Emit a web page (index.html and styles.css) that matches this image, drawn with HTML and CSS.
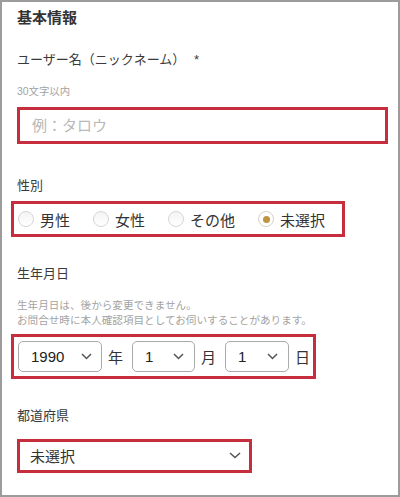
FILE: index.html
```html
<!DOCTYPE html>
<html lang="ja">
<head>
<meta charset="utf-8">
<title>基本情報</title>
<link rel="stylesheet" href="styles.css">
</head>
<body>
<div class="frame">
  <h2 class="heading">基本情報</h2>

  <div class="label label-name">ユーザー名（ニックネーム） <span class="req">*</span></div>
  <div class="hint">30文字以内</div>
  <input class="text-input hl" type="text" placeholder="例：タロウ">

  <div class="label label-gender">性別</div>
  <div class="radio-row hl">
    <label class="radio"><span class="dot"></span><span class="rtext">男性</span></label>
    <label class="radio"><span class="dot"></span><span class="rtext">女性</span></label>
    <label class="radio"><span class="dot"></span><span class="rtext">その他</span></label>
    <label class="radio checked"><span class="dot"></span><span class="rtext">未選択</span></label>
  </div>

  <div class="label label-birth">生年月日</div>
  <div class="notes">生年月日は、後から変更できません。<br>お問合せ時に本人確認項目としてお伺いすることがあります。</div>
  <div class="date-row hl">
    <div class="select sel-year"><span>1990</span><svg class="chev" width="11" height="7" viewBox="0 0 11 7"><path d="M1 1 L5.5 5.5 L10 1" fill="none" stroke="#555" stroke-width="1.5"/></svg></div>
    <span class="unit">年</span>
    <div class="select sel-month"><span>1</span><svg class="chev" width="11" height="7" viewBox="0 0 11 7"><path d="M1 1 L5.5 5.5 L10 1" fill="none" stroke="#555" stroke-width="1.5"/></svg></div>
    <span class="unit">月</span>
    <div class="select sel-day"><span>1</span><svg class="chev" width="11" height="7" viewBox="0 0 11 7"><path d="M1 1 L5.5 5.5 L10 1" fill="none" stroke="#555" stroke-width="1.5"/></svg></div>
    <span class="unit">日</span>
  </div>

  <div class="label label-pref">都道府県</div>
  <div class="pref-select hl"><span>未選択</span><svg class="chev" width="12" height="7" viewBox="0 0 12 7"><path d="M1 1 L6 5.5 L11 1" fill="none" stroke="#555" stroke-width="1.5"/></svg></div>
</div>
</body>
</html>
```

FILE: styles.css
```css
* { box-sizing: border-box; }

html, body {
  margin: 0;
  padding: 0;
  background: #fff;
}

body {
  font-family: "Liberation Sans", "Noto Sans CJK JP", sans-serif;
  color: #333;
}

.frame {
  width: 400px;
  height: 497px;
  border: 2px solid #9c9c9c;
  padding: 6px 0 0 15px;
  overflow: hidden;
}

.heading {
  margin: 0;
  font-size: 15px;
  line-height: 20px;
  font-weight: bold;
  color: #333;
}

.label {
  font-size: 13px;
  line-height: 18px;
  color: #3a3a3a;
}

.label-name { margin-top: 23px; }
.req { margin-left: 5px; }

.hint {
  margin-top: 15.5px;
  font-size: 10.4px;
  line-height: 14px;
  color: #a3a3a3;
}

.hl {
  border: 3px solid #c62d3d;
}

.text-input {
  display: block;
  margin: 8.5px 0 0 0;
  width: 371px;
  height: 37px;
  padding: 0 0 0 12px;
  font-family: "Liberation Sans", "Noto Sans CJK JP", sans-serif;
  font-size: 15px;
  color: #333;
  background: #fff;
  border-radius: 0;
  outline: none;
}

.text-input::placeholder {
  color: #b8b8b8;
}

.label-gender { margin-top: 33px; }

.radio-row {
  margin: 6px 0 0 -6px;
  width: 334px;
  height: 36px;
  display: flex;
  align-items: center;
  padding-left: 4px;
  gap: 23px;
}

.radio {
  display: flex;
  align-items: center;
  font-size: 15px;
  color: #333;
}

.dot {
  width: 16px;
  height: 16px;
  border-radius: 50%;
  border: 1px solid #d6d6d6;
  margin-right: 6px;
  display: flex;
  align-items: center;
  justify-content: center;
  background: linear-gradient(#f4f4f4, #fff);
}

.radio.checked .dot {
  border-color: #d8d2c4;
  background: #fff;
}

.radio.checked .dot::after {
  content: "";
  width: 7px;
  height: 7px;
  border-radius: 50%;
  background: #c1923f;
}

.label-birth { margin-top: 27.5px; }

.notes {
  margin-top: 15px;
  font-size: 10.6px;
  line-height: 15.5px;
  color: #a3a3a3;
}

.date-row {
  margin: 5px 0 0 -6px;
  width: max-content;
  height: 45px;
  display: flex;
  align-items: center;
  padding: 0 3px 0 4px;
}

.select {
  height: 31px;
  border: 1px solid #aaa;
  border-radius: 5px;
  display: flex;
  align-items: center;
  justify-content: space-between;
  padding: 0 9px 0 12px;
  font-size: 15px;
  color: #222;
}

.sel-year { width: 84px; }
.sel-month { width: 63px; padding-right: 10px; }
.sel-day { width: 64px; padding-right: 10px; }

.unit {
  font-size: 15px;
  color: #333;
  margin: 0 9px 0 6px;
}

.unit:last-child { margin-right: 0; }

.label-pref { margin-top: 28px; }

.pref-select {
  margin-top: 14px;
  width: 235px;
  height: 34px;
  display: flex;
  align-items: center;
  justify-content: space-between;
  padding: 0 8px 0 10px;
  font-size: 15px;
  color: #333;
}

.chev { display: block; }
```
